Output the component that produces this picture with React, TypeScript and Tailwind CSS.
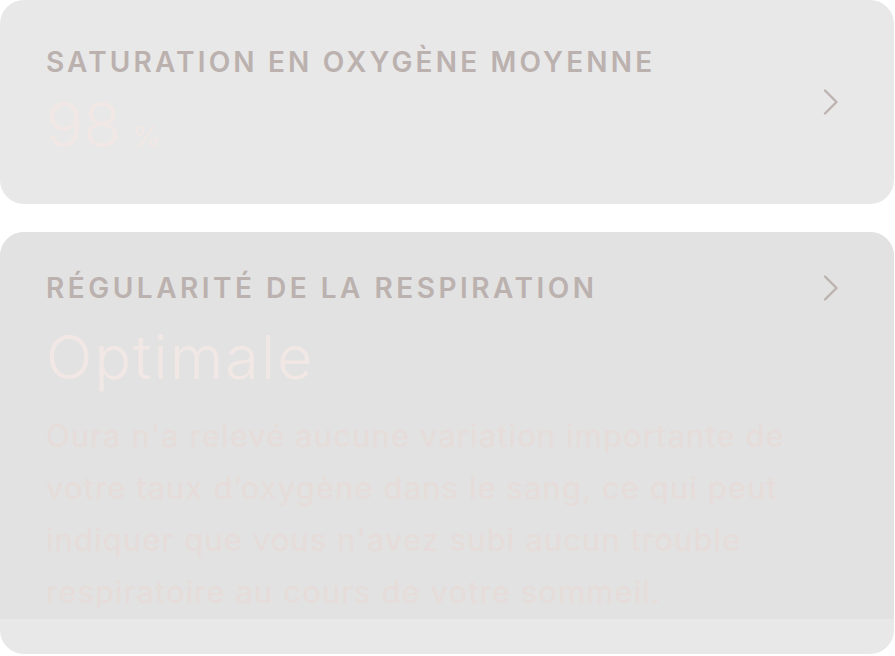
import React from "react";

function Chevron() {
  return (
    <svg width="16" height="26" viewBox="0 0 16 26" fill="none">
      <path d="M2 1.5 L13.5 13 L2 24.5" stroke="#bcb2af" strokeWidth="2.4" strokeLinecap="round" strokeLinejoin="round" />
    </svg>
  );
}

export default function App() {
  return (
    <div className="w-[895px] h-[656px] bg-white flex flex-col" style={{ fontFamily: "Inter, 'Noto Sans', sans-serif" }}>
      <div className="w-[894px] h-[204px] bg-[#e8e8e8] rounded-[24px] flex items-center justify-between pl-[46px] pr-[55px]">
        <div className="flex flex-col self-start pt-[48px]">
          <div className="text-[28px] leading-[28px] font-semibold tracking-[0.113em] text-[#bbb1ae] whitespace-nowrap">
            SATURATION EN OXYGÈNE MOYENNE
          </div>
          <div className="mt-[18px] flex items-baseline text-[#f1e8e5]">
            <span className="text-[62px] leading-[61px] font-light">98</span>
            <span className="ml-[11px] text-[29px] leading-[26px] font-normal">%</span>
          </div>
        </div>
        <Chevron />
      </div>
      <div className="mt-[28px] w-[894px] h-[422px] bg-[#e8e8e8] rounded-[24px] overflow-hidden flex flex-col">
        <div className="h-[387px] bg-[#e2e2e2] pl-[46px] pr-[55px] pt-[42px]">
          <div className="flex items-center justify-between">
            <div className="text-[28px] leading-[28px] font-semibold tracking-[0.125em] text-[#bbb1ae] whitespace-nowrap">
              RÉGULARITÉ DE LA RESPIRATION
            </div>
            <Chevron />
          </div>
          <div className="mt-[25px] text-[61px] leading-[60px] font-light tracking-[0.035em] text-[#f1e8e5]">Optimale</div>
          <div className="mt-[23px] text-[31px] leading-[52px] tracking-[0.036em] text-[#e6dcd9] whitespace-nowrap">
            Oura n'a relevé aucune variation importante de
            <br />
            votre taux d’oxygène dans le sang, ce qui peut
            <br />
            indiquer que vous n'avez subi aucun trouble
            <br />
            respiratoire au cours de votre sommeil.
          </div>
        </div>
      </div>
    </div>
  );
}
